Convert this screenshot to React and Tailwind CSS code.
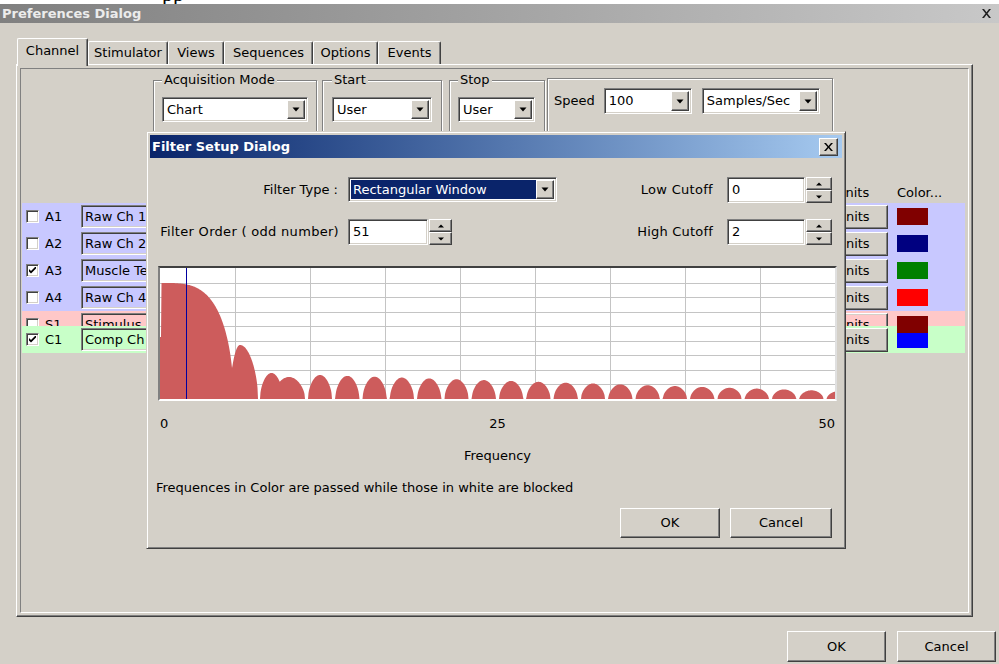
import React from 'react'

const font = "font-['DejaVu_Sans',sans-serif]"

// classic 3D edges
const raised =
  'border border-t-white border-l-white border-b-[#404040] border-r-[#404040] shadow-[inset_-1px_-1px_0_#808080,inset_1px_1px_0_#d4d0c8]'
const sunken =
  'border border-t-[#808080] border-l-[#808080] border-b-white border-r-white shadow-[inset_1px_1px_0_#404040,inset_-1px_-1px_0_#d4d0c8]'
const etched = 'border border-[#808080] shadow-[inset_1px_1px_0_white,1px_1px_0_white]'

function Arrow({ up = false }) {
  return (
    <svg width="8" height="5" viewBox="0 0 8 5">
      <path d={up ? 'M0.5 4.5h7L4 0.5z' : 'M0.5 0.5h7L4 4.5z'} fill="black" />
    </svg>
  )
}

function Combo({ value, className = '', selected = false }) {
  return (
    <div className={`flex items-stretch bg-white p-[2px] ${sunken} ${className}`}>
      <div className="flex-1 min-w-0 flex items-stretch overflow-hidden">
        <span
          className={`flex items-center px-[2px] whitespace-nowrap ${selected ? 'flex-1 bg-[#0a246a] text-white' : ''}`}
        >
          {value}
        </span>
      </div>
      <div className={`w-[18px] flex items-center justify-center bg-[#d4d0c8] ${raised}`}>
        <Arrow />
      </div>
    </div>
  )
}

function Spin({ className = '' }) {
  return (
    <div className={`flex flex-col ${className}`}>
      <div className={`flex-1 flex items-center justify-center bg-[#d4d0c8] ${raised}`}>
        <svg width="6" height="4" viewBox="0 0 6 4">
          <path d="M0 3.5h6L3 0.5z" fill="black" />
        </svg>
      </div>
      <div className={`flex-1 flex items-center justify-center bg-[#d4d0c8] ${raised}`}>
        <svg width="6" height="4" viewBox="0 0 6 4">
          <path d="M0 0.5h6L3 3.5z" fill="black" />
        </svg>
      </div>
    </div>
  )
}

function NumberField({ value, inputW, spinW }) {
  return (
    <div className="flex h-[26px]">
      <div className={`flex items-center pl-[4px] bg-white ${sunken} ${inputW}`}>{value}</div>
      <Spin className={`ml-[1px] ${spinW}`} />
    </div>
  )
}

function Check({ on }) {
  return (
    <div className={`w-[13px] h-[13px] shrink-0 flex items-center justify-center bg-white ${sunken}`}>
      {on && (
        <svg width="7" height="7" viewBox="0 0 7 7">
          <path d="M0 2l2 2 5-5v2.5l-5 5-2-2z" fill="black" />
        </svg>
      )}
    </div>
  )
}

function Button({ children, className = '' }) {
  return (
    <div className={`flex items-center justify-center bg-[#d4d0c8] ${raised} ${className}`}>{children}</div>
  )
}

const tabs = [
  { label: 'Channel', w: 'w-[71px]', active: true },
  { label: 'Stimulator', w: 'w-[80px]' },
  { label: 'Views', w: 'w-[56px]' },
  { label: 'Sequences', w: 'w-[89px]' },
  { label: 'Options', w: 'w-[65px]' },
  { label: 'Events', w: 'w-[63px]' },
]

const channels = [
  { id: 'A1', name: 'Raw Ch 1', bg: 'bg-[#c8c8ff]', color: 'bg-[#800000]' },
  { id: 'A2', name: 'Raw Ch 2', bg: 'bg-[#c8c8ff]', color: 'bg-[#000080]' },
  { id: 'A3', name: 'Muscle Tension', bg: 'bg-[#c8c8ff]', color: 'bg-[#008000]', on: true },
  { id: 'A4', name: 'Raw Ch 4', bg: 'bg-[#c8c8ff]', color: 'bg-[#ff0000]' },
  { id: 'S1', name: 'Stimulus', bg: 'bg-[#ffc8c8]', color: 'bg-[#800000] relative z-10' },
  { id: 'C1', name: 'Comp Ch 1', bg: 'bg-[#c8ffc8]', extra: 'relative -mt-[12px]', color: 'bg-[#0000ff]', on: true },
]

// filter magnitude response, in chart pixels (675 x 131)
const W = 675
const H = 131

function arch(x, start, width, peak) {
  if (x < start || x > start + width) return 0
  return peak * Math.sqrt(Math.max(0, Math.sin((Math.PI * (x - start)) / width)))
}

function magnitude(x) {
  if (x < 1.5) return 62
  let h = 0
  if (x <= 74) {
    const t = Math.min(1, (x - 1.5) / 72)
    h = 116 * Math.sqrt(Math.max(0, 1 - Math.pow(t, 3.5)))
  }
  if (x >= 70 && x <= 98) {
    const l =
      x < 80
        ? 54 * Math.sqrt(Math.max(0, Math.sin(((Math.PI / 2) * (x - 70)) / 10)))
        : 54 * Math.sqrt(Math.max(0, Math.cos(((Math.PI / 2) * (x - 80)) / 18)))
    h = Math.max(h, l)
  }
  h = Math.max(h, arch(x, 100, 23, 26), arch(x, 113, 32, 22))
  for (let i = 0; i < 20; i++) {
    h = Math.max(h, arch(x, 148 + 27.3 * i, 24, 24 - 0.85 * i))
  }
  return h
}

function responsePoints() {
  const pts = [`0,${H}`]
  for (let x = 0; x <= W; x += 0.5) {
    pts.push(`${x},${(H - magnitude(x)).toFixed(1)}`)
  }
  pts.push(`${W},${H}`)
  return pts.join(' ')
}

function ResponseChart() {
  const cols = [1, 2, 3, 4, 5, 6, 7, 8]
  return (
    <div className="w-[679px] h-[135px] bg-white border-2 border-t-[#404040] border-l-[#808080] border-b-white border-r-[#e0e0e0]">
      <svg width={W} height={H} className="block">
        {cols.map((k) => (
          <line key={'v' + k} x1={75 * k + 0.5} x2={75 * k + 0.5} y1="0" y2={H} stroke="#c4c4c4" />
        ))}
        {cols.map((k) => {
          const y = Math.round((H * k) / 9) + 0.5
          return <line key={'h' + k} x1="0" x2={W} y1={y} y2={y} stroke="#c4c4c4" />
        })}
        <polygon points={responsePoints()} fill="#cd5c5c" />
        <line x1="26.5" x2="26.5" y1="0" y2={H} stroke="#0000a0" />
      </svg>
    </div>
  )
}

function FilterDialog() {
  return (
    <div className="absolute left-[146px] top-[131px] w-[700px] h-[418px] p-[3px] bg-[#d4d0c8] border border-t-[#d4d0c8] border-l-[#d4d0c8] border-b-[#404040] border-r-[#404040] shadow-[inset_1px_1px_0_white,inset_-1px_-1px_0_#808080]">
      <div className="h-[23px] flex items-center pl-[2px] bg-gradient-to-r from-[#0a246a] to-[#a6caf0]">
        <span className="font-bold text-white">Filter Setup Dialog</span>
        <Button className="ml-auto mr-[4px] w-[19px] h-[18px]">
          <svg width="9" height="8" viewBox="0 0 9 8">
            <path d="M0 0h2l2.5 3 2.5-3h2L5.5 4 9 8H7L4.5 5 2 8H0l3.5-4z" fill="black" />
          </svg>
        </Button>
      </div>

      <div className="pl-[8px] pr-[5px]">
        <div className="mt-[19px] grid grid-cols-[190px_230px_149px_105px] grid-rows-[26px_26px] gap-y-[16px] whitespace-nowrap">
          <div className="flex items-center justify-end pr-[10px]">Filter Type :</div>
          <Combo value="Rectangular Window" selected className="w-[209px] h-[25px]" />
          <div className="flex items-center justify-end pr-[14px] tracking-[0.3px]">Low Cutoff</div>
          <NumberField value="0" inputW="w-[79px]" spinW="w-[26px]" />

          <div className="flex items-center justify-end pr-[9px] tracking-[0.3px]">Filter Order ( odd number)</div>
          <NumberField value="51" inputW="w-[80px]" spinW="w-[23px]" />
          <div className="flex items-center justify-end pr-[14px] tracking-[0.2px]">High Cutoff</div>
          <NumberField value="2" inputW="w-[79px]" spinW="w-[26px]" />
        </div>

        <div className="mt-[21px]">
          <ResponseChart />
        </div>

        <div className="mt-[15px] w-[679px] h-[16px] grid grid-cols-3 px-[2px] leading-[16px]">
          <span>0</span>
          <span className="text-center">25</span>
          <span className="text-right">50</span>
        </div>
        <div className="mt-[16px] w-[679px] h-[16px] leading-[16px] text-center">Frequency</div>
        <div className="mt-[16px] -ml-[2px] h-[16px] leading-[16px]">
          Frequences in Color are passed while those in white are blocked
        </div>

        <div className="mt-[12px] flex justify-end gap-[10px] pr-[5px]">
          <Button className="w-[100px] h-[30px]">OK</Button>
          <Button className="w-[102px] h-[30px]">Cancel</Button>
        </div>
      </div>
    </div>
  )
}

export default function App() {
  return (
    <div className={`relative w-[999px] h-[664px] overflow-hidden bg-[#d4d0c8] text-[13px] text-black ${font}`}>
      {/* page behind the window */}
      <div className="h-[4px] bg-white overflow-hidden">
        <div className="-mt-[15px] ml-[162px] font-['Liberation_Serif',serif] text-[22px] leading-[18px]">pp</div>
      </div>

      {/* inactive caption */}
      <div className="h-[19px] flex items-center pl-[2px] bg-gradient-to-r from-[#808080] to-[#c8c8c8]">
        <span className="font-bold text-[#ececec]">Preferences Dialog</span>
        <svg className="ml-auto mr-[8px]" width="9" height="9" viewBox="0 0 9 9">
          <path d="M0 0h2l2.5 3.2L7 0h2L5.5 4.5 9 9H7L4.5 5.8 2 9H0l3.5-4.5z" fill="#202020" />
        </svg>
      </div>

      {/* tabs */}
      <div className="mt-[15px] ml-[17px] h-[26px] flex items-end">
        {tabs.map((t) => (
          <div
            key={t.label}
            className={`${t.w} ${t.active ? 'h-[28px] -mb-[2px] relative z-10 pb-[3px]' : 'h-[23px]'} flex items-center justify-center bg-[#d4d0c8] border-t border-l border-r border-t-white border-l-white border-r-[#404040] shadow-[inset_-1px_0_0_#808080] rounded-t-[2px]`}
          >
            {t.label}
          </div>
        ))}
      </div>

      {/* tab page */}
      <div className="ml-[16px] w-[957px] h-[553px] p-[3px] border border-t-white border-l-white border-b-[#404040] border-r-[#404040] shadow-[inset_-1px_-1px_0_#808080]">
        <div className="h-full border border-t-[#808080] border-l-[#808080] border-b-white border-r-white">
          {/* acquisition settings */}
          <div className="mt-[3px] ml-[132px] h-[68px] flex items-start">
            <fieldset className={`w-[164px] h-[68px] px-[8px] min-w-0 ${etched}`}>
              <legend className="px-[2px] leading-[16px] bg-[#d4d0c8]">Acquisition Mode</legend>
              <Combo value="Chart" className="mt-[9px] w-[146px] h-[25px]" />
            </fieldset>
            <fieldset className={`ml-[5px] w-[120px] h-[68px] px-[9px] min-w-0 ${etched}`}>
              <legend className="px-[2px] leading-[16px] bg-[#d4d0c8]">Start</legend>
              <Combo value="User" className="mt-[9px] w-[100px] h-[25px]" />
            </fieldset>
            <fieldset className={`ml-[7px] w-[96px] h-[68px] px-[8px] min-w-0 ${etched}`}>
              <legend className="px-[2px] leading-[16px] bg-[#d4d0c8]">Stop</legend>
              <Combo value="User" className="mt-[9px] w-[77px] h-[25px]" />
            </fieldset>
            <div className={`ml-[2px] mt-[6px] w-[286px] h-[62px] pt-[9px] pl-[6px] flex items-start ${etched}`}>
              <span className="h-[26px] flex items-center">Speed</span>
              <Combo value="100" className="ml-[9px] w-[88px] h-[26px]" />
              <Combo value="Samples/Sec" className="ml-[10px] w-[118px] h-[26px]" />
            </div>
          </div>

          {/* channel table */}
          <div className="mt-[43px] ml-[1px] w-[943px] h-[20px] flex items-center">
            <span className="flex-1" />
            <span className="w-[61px]">Units</span>
            <span className="w-[68px]">Color...</span>
          </div>
          <div className="ml-[1px] w-[943px]">
            {channels.map((c) => (
              <div key={c.id} className={`h-[27px] flex items-center pl-[4px] pr-[37px] ${c.bg} ${c.extra || ''}`}>
                <Check on={c.on} />
                <span className="ml-[6px] w-[36px]">{c.id}</span>
                <div className={`w-[150px] h-[23px] flex items-center pl-[3px] whitespace-nowrap ${sunken}`}>{c.name}</div>
                <span className="flex-1" />
                <Button className={`w-[66px] h-[24px] pr-[4px] ${c.bg}`}>Units</Button>
                <div className={`ml-[9px] w-[31px] h-[17px] ${c.color}`} />
              </div>
            ))}
          </div>
        </div>
      </div>

      {/* dialog buttons */}
      <div className="mt-[14px] flex justify-end gap-[11px] pr-[3px]">
        <Button className="w-[99px] h-[31px]">OK</Button>
        <Button className="w-[99px] h-[31px]">Cancel</Button>
      </div>

      <FilterDialog />
    </div>
  )
}
